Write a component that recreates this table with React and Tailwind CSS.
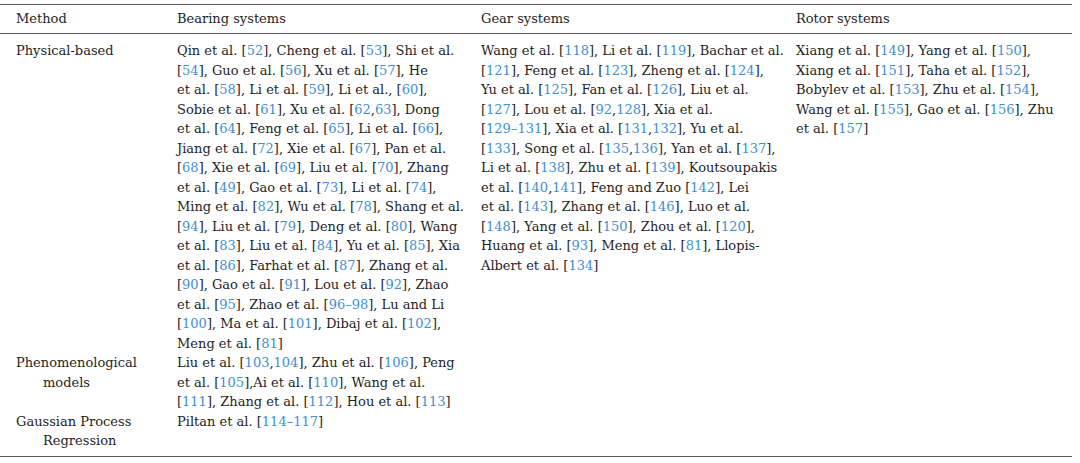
const bearing = [
  "Qin et al. [52], Cheng et al. [53], Shi et al.",
  "[54], Guo et al. [56], Xu et al. [57], He",
  "et al. [58], Li et al. [59], Li et al., [60],",
  "Sobie et al. [61], Xu et al. [62,63], Dong",
  "et al. [64], Feng et al. [65], Li et al. [66],",
  "Jiang et al. [72], Xie et al. [67], Pan et al.",
  "[68], Xie et al. [69], Liu et al. [70], Zhang",
  "et al. [49], Gao et al. [73], Li et al. [74],",
  "Ming et al. [82], Wu et al. [78], Shang et al.",
  "[94], Liu et al. [79], Deng et al. [80], Wang",
  "et al. [83], Liu et al. [84], Yu et al. [85], Xia",
  "et al. [86], Farhat et al. [87], Zhang et al.",
  "[90], Gao et al. [91], Lou et al. [92], Zhao",
  "et al. [95], Zhao et al. [96–98], Lu and Li",
  "[100], Ma et al. [101], Dibaj et al. [102],",
  "Meng et al. [81]",
];

const gear = [
  "Wang et al. [118], Li et al. [119], Bachar et al.",
  "[121], Feng et al. [123], Zheng et al. [124],",
  "Yu et al. [125], Fan et al. [126], Liu et al.",
  "[127], Lou et al. [92,128], Xia et al.",
  "[129–131], Xia et al. [131,132], Yu et al.",
  "[133], Song et al. [135,136], Yan et al. [137],",
  "Li et al. [138], Zhu et al. [139], Koutsoupakis",
  "et al. [140,141], Feng and Zuo [142], Lei",
  "et al. [143], Zhang et al. [146], Luo et al.",
  "[148], Yang et al. [150], Zhou et al. [120],",
  "Huang et al. [93], Meng et al. [81], Llopis-",
  "Albert et al. [134]",
];

const rotor = [
  "Xiang et al. [149], Yang et al. [150],",
  "Xiang et al. [151], Taha et al. [152],",
  "Bobylev et al. [153], Zhu et al. [154],",
  "Wang et al. [155], Gao et al. [156], Zhu",
  "et al. [157]",
];

const pheno = [
  "Liu et al. [103,104], Zhu et al. [106], Peng",
  "et al. [105],Ai et al. [110], Wang et al.",
  "[111], Zhang et al. [112], Hou et al. [113]",
];

const gpr = ["Piltan et al. [114–117]"];

function Cited({ text }) {
  const parts = text.split(/(\[[^\]]*\])/);
  return parts.map((p, i) => {
    if (!p.startsWith("[")) return <span key={i}>{p}</span>;
    const inner = p.slice(1, -1).split(/(,)/);
    return (
      <span key={i}>
        [
        {inner.map((s, j) =>
          s === "," ? (
            <span key={j}>,</span>
          ) : (
            <span key={j} className="text-[#3f8fd2]">
              {s}
            </span>
          )
        )}
        ]
      </span>
    );
  });
}

function Lines({ lines }) {
  return (
    <div>
      {lines.map((l, i) => (
        <div key={i} className="whitespace-nowrap">
          <Cited text={l} />
        </div>
      ))}
    </div>
  );
}

function Method({ first, rest }) {
  return (
    <div>
      <div className="whitespace-nowrap">{first}</div>
      {rest && <div className="pl-[27px] whitespace-nowrap">{rest}</div>}
    </div>
  );
}

export default function App() {
  return (
    <div className="w-[1080px] h-[463px] bg-white pt-[4px] text-[#1e1e1e] font-['DejaVu_Serif',serif] text-[13px] leading-[19.5px]">
      <div className="w-[1072px] border-t-[1.5px] border-[#5a5a5a]">
        <div className="grid grid-cols-[161px_304px_315px_1fr] pl-4 h-[29px] items-center border-b-[1.5px] border-[#5a5a5a]">
          <div>Method</div>
          <div>Bearing systems</div>
          <div>Gear systems</div>
          <div>Rotor systems</div>
        </div>
        <div className="pt-[7px] pb-[5px] border-b-[1.5px] border-[#5a5a5a]">
          <div className="grid grid-cols-[161px_304px_315px_1fr] pl-4">
            <Method first="Physical-based" />
            <Lines lines={bearing} />
            <Lines lines={gear} />
            <Lines lines={rotor} />
          </div>
          <div className="grid grid-cols-[161px_304px_315px_1fr] pl-4">
            <Method first="Phenomenological" rest="models" />
            <Lines lines={pheno} />
          </div>
          <div className="grid grid-cols-[161px_304px_315px_1fr] pl-4">
            <Method first="Gaussian Process" rest="Regression" />
            <Lines lines={gpr} />
          </div>
        </div>
      </div>
    </div>
  );
}
